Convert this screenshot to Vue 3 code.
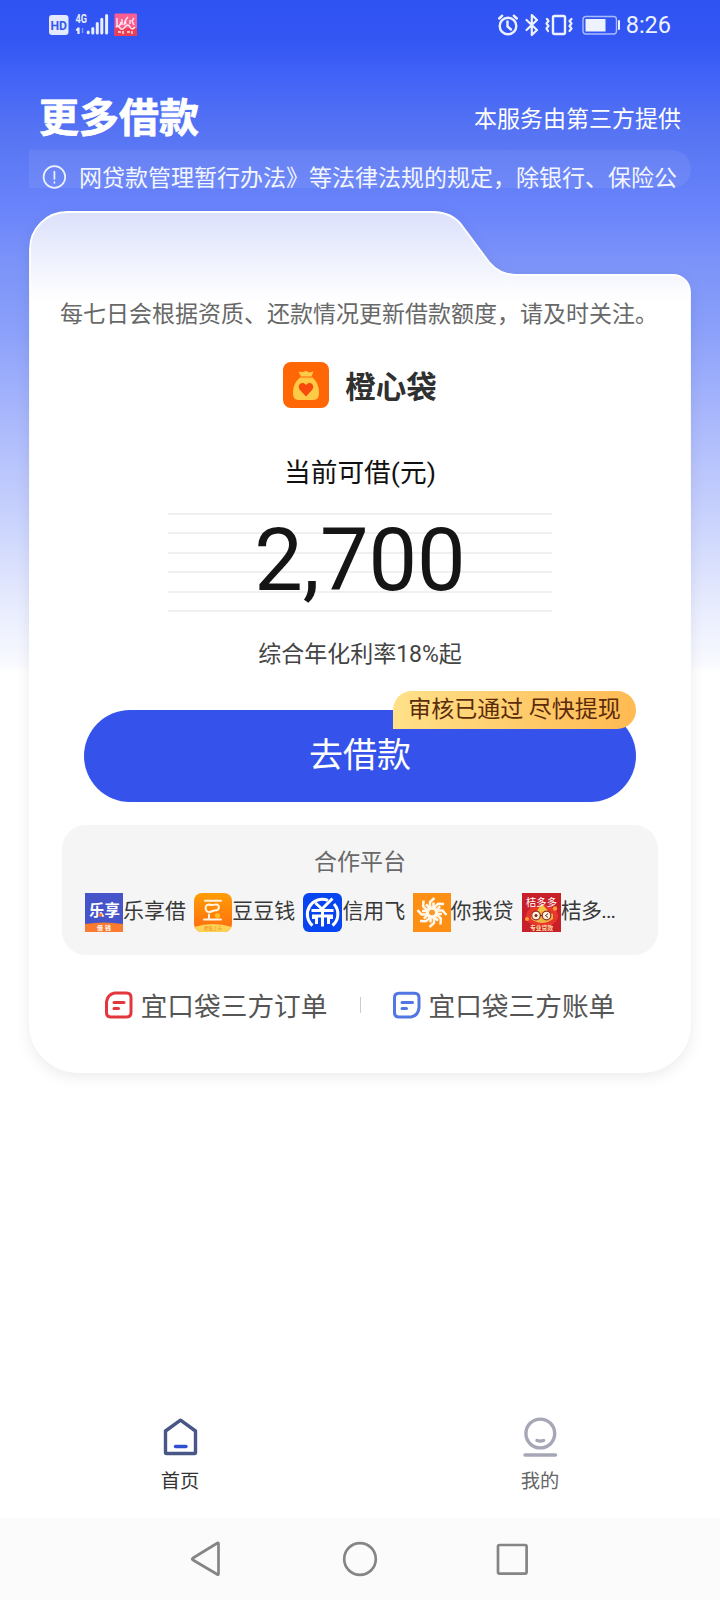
<script setup>
const platforms = [
  { id: 'lexiang', name: '乐享借' },
  { id: 'doudou', name: '豆豆钱' },
  { id: 'feifei', name: '信用飞' },
  { id: 'niwo', name: '你我贷' },
  { id: 'juduo', name: '桔多...' },
]
const petals = [0, 45, 90, 135, 180, 225, 270, 315]
</script>

<template>
  <div class="screen">
    <header class="status">
      <svg class="status-left" width="92" height="26" viewBox="0 0 92 26">
        <rect x="1" y="3" width="19.500" height="20" rx="3" fill="#e3e9ff" />
        <text x="10.700" y="17.800" text-anchor="middle" font-size="13.500" font-weight="700" fill="#3459ee" textLength="16.500" lengthAdjust="spacingAndGlyphs">HD</text>
        <text x="27.500" y="11" font-size="13" font-weight="700" fill="#e8edff" textLength="11.500" lengthAdjust="spacingAndGlyphs">4G</text>
        <path d="M30.500 15.500v6.500M28.300 18.500l2-2" stroke="#e8edff" stroke-width="2.200" fill="none" />
        <path d="M34.500 16v5" stroke="#7f96fb" stroke-width="1.500" />
        <path d="M40.200 20v.8M44.800 16.500v4.500M49.300 11.500v9.500M53.800 7.300v13.700M58.600 3.500v17.500" stroke="#e8edff" stroke-width="3" stroke-linecap="round" />
        <rect x="66.500" y="1.500" width="22.500" height="22.500" rx="1" fill="#fb5f91" />
        <path d="M66.500 16h22.500v7a1 1 0 0 1-1 1h-20.500a1 1 0 0 1-1-1z" fill="#ee3d55" />
        <path d="M69 6v8q3 1 4-4M74 7v6M77 9l-1 4M80 5q-4 4-2 7M82 8v4M86 6l-2 3 2 4M68 15q2-2 4 1t5-1 5 0 5 0M70 20h3M75 19v3M79 20h3M84 19v3" stroke="#ffe9ef" stroke-width="1.400" fill="none" />
      </svg>
      <div class="status-right">
        <svg width="124" height="24" viewBox="0 0 124 24" fill="none" stroke="#eef2ff" stroke-linecap="round" stroke-linejoin="round">
          <g stroke-width="2.400">
            <circle cx="12" cy="13" r="8.300" />
            <path d="M11.500 8.500v5l3.500 3M3.200 5.500l3-2.800M20.800 5.500l-3-2.800" />
          </g>
          <path d="M30.500 7l10.500 10-5.200 5v-20l5.200 5-10.500 10" stroke-width="2.200" />
          <rect x="57" y="3" width="12" height="18" rx="1.500" stroke-width="2.400" />
          <path d="M51 6l1.500 2-2 2.500 2 2.500-2 2.500 1.500 2.500M75.500 6l-2 2 2 2.500-2 2.500 2 2.500-2 2.500" stroke-width="2.200" />
          <rect x="87" y="3.500" width="33.500" height="17.500" rx="3" stroke="#a9baff" stroke-width="1.400" />
          <rect x="89.500" y="6" width="20" height="12.500" fill="#eef2ff" stroke="none" />
          <path d="M123 8v8" stroke-width="2" />
        </svg>
        <span>8:26</span>
      </div>
    </header>

    <div class="heading">
      <h1>更多借款</h1>
      <span>本服务由第三方提供</span>
    </div>

    <div class="notice">
      <svg width="26" height="26" viewBox="0 0 26 26" fill="none" stroke="#eef2ff" stroke-width="1.700" stroke-linecap="round">
        <circle cx="13.400" cy="13" r="10.800" />
        <path d="M13.400 7.500v7.500M13.400 18v.8" />
      </svg>
      <div class="marquee">网贷款管理暂行办法》等法律法规的规定，除银行、保险公</div>
    </div>

    <main class="card">
      <svg class="card-shape" width="662" height="862" viewBox="0 0 662 862">
        <defs>
          <linearGradient id="tabFill" x1="0" y1="0" x2="0" y2="90" gradientUnits="userSpaceOnUse">
            <stop offset="0" stop-color="#dbe0fb" />
            <stop offset="1" stop-color="#ffffff" />
          </linearGradient>
        </defs>
        <path d="M1 38A37 37 0 0 1 38 1H404C418 1 427 6 434 16L460 51Q470 63 486 64H644A17 17 0 0 1 661 81V813A48 48 0 0 1 613 861H49A48 48 0 0 1 1 813Z" fill="url(#tabFill)" stroke="#ffffff" stroke-width="1.800" />
      </svg>

      <p class="tip">每七日会根据资质、还款情况更新借款额度，请及时关注。</p>

      <div class="brand">
        <svg width="46" height="46" viewBox="0 0 46 46">
          <rect width="46" height="46" rx="8" fill="#ff6606" />
          <path d="M15.500 9.500l4 .8 3.500-1.500 3 1.700 4.500-1-2 5H18zM17 15.500h12.500q6.500 6 6.500 14.500c0 5-1 8-6 8H16c-5 0-6-3-6-8q0-8.500 7-14.500z" fill="#ffcb46" />
          <path d="M17 15.500h12.500" stroke="#fb9a2c" stroke-width="1.300" />
          <path d="M23 34.500l-6-6.500c-4-5 2.500-10 6-5 3.500-5 10 0 6 5z" fill="#f94a0d" />
        </svg>
        <strong>橙心袋</strong>
      </div>

      <div class="limit-label">当前可借(元)</div>
      <div class="amount">2,700</div>
      <div class="rate">综合年化利率18%起</div>

      <div class="cta">
        <button type="button">去借款</button>
        <span class="badge">审核已通过 尽快提现</span>
      </div>

      <section class="partners">
        <div class="partners-title">合作平台</div>
        <div class="partners-row">
          <div v-for="p in platforms" :key="p.id" class="partner" :class="p.id">
            <svg v-if="p.id === 'lexiang'" width="38" height="39" viewBox="0 0 38 39">
              <rect width="38" height="39" fill="#4654ca" />
              <path d="M0 31q19-3 38 0v8H0z" fill="#f87b30" />
              <text x="19.500" y="22.800" text-anchor="middle" font-size="15.500" font-weight="700" fill="#fff">乐享</text>
              <circle cx="15.500" cy="22" r="1.700" fill="#f87b30" />
              <text x="20" y="36.500" text-anchor="middle" font-size="6" font-weight="700" fill="#fff" letter-spacing="2">借钱</text>
            </svg>
            <svg v-else-if="p.id === 'doudou'" width="38" height="39" viewBox="0 0 38 39">
              <defs>
                <linearGradient id="bean" x1="0" y1="0" x2="0" y2="1">
                  <stop offset="0" stop-color="#ff9d05" />
                  <stop offset="1" stop-color="#ff6a12" />
                </linearGradient>
                <clipPath id="beanClip"><rect width="38" height="39" rx="8" /></clipPath>
              </defs>
              <g clip-path="url(#beanClip)">
                <rect width="38" height="39" fill="url(#bean)" />
                <path d="M0 34q19-6 38 0v5H0z" fill="#ffd454" />
              </g>
              <g fill="none" stroke="#fff4df" stroke-width="2" stroke-linecap="round">
                <path d="M11 7.800h16M10 26.500h17M15 21.500v4" />
                <path d="M15 11.500c-5 0-4 7.500 0 7.500 3 0 3-1.500 6-1.500 5 0 5-6 1-6-3 0-4 1.500-7 0z" />
              </g>
              <circle cx="23.500" cy="22.500" r="2.600" fill="#ffbd22" />
              <text x="19" y="37" text-anchor="middle" font-size="4.500" fill="#ef8422">赊账上市</text>
            </svg>
            <svg v-else-if="p.id === 'feifei'" width="39" height="39" viewBox="0 0 39 39">
              <rect width="39" height="39" rx="6" fill="#0745f0" />
              <g fill="none" stroke="#fff" stroke-width="3">
                <path d="M9.500 32.500A15 15 0 0 1 25 7.300M31 11A15 15 0 0 1 29.500 32.500" />
                <path d="M12.500 10l6.500 6L29.500 5.500M8.500 17.500h22M10.500 26v-3h18v3M19.500 17v16.500M13.500 31v-8M25.500 31v-8" />
              </g>
            </svg>
            <svg v-else-if="p.id === 'niwo'" width="38" height="39" viewBox="0 0 38 39">
              <rect width="38" height="39" fill="#fd9014" />
              <g v-for="a in petals" :key="a" :transform="`rotate(${a} 19 19.500)`">
                <path d="M17 16V9l4.500-4M20.500 15V9.500" fill="none" stroke="#fff8eb" stroke-width="2.500" />
              </g>
              <circle cx="19" cy="19.500" r="4.500" fill="none" stroke="#fff8eb" stroke-width="3.500" />
              <circle cx="19" cy="19.500" r="2.600" fill="#f49a2b" />
            </svg>
            <svg v-else width="39" height="39" viewBox="0 0 39 39">
              <rect width="39" height="39" fill="#c8202a" />
              <ellipse cx="20" cy="23" rx="16" ry="11" fill="#e8362c" />
              <circle cx="33" cy="15.500" r="2.200" fill="#ff9d3b" />
              <circle cx="5" cy="26" r="2" fill="#ff9d3b" />
              <path d="M14 19l6-8 7 8z" fill="#f5c63f" />
              <path d="M9 21q11-5 22 0v5q-11 8-22 0z" fill="#efb345" />
              <g fill="#fff2dc" stroke="#983022" stroke-width="1.200">
                <circle cx="14" cy="22.500" r="4.300" />
                <circle cx="24.500" cy="22.500" r="4.300" />
              </g>
              <circle cx="14" cy="22.500" r="1.500" fill="#6d2520" />
              <path d="M26 20.500l-2.500 2 2.500 2M18 22.500h2" stroke="#6d2520" fill="none" />
              <text x="19.500" y="12.500" text-anchor="middle" font-size="10.300" font-weight="400" fill="#fff">桔多多</text>
              <text x="19.500" y="36.800" text-anchor="middle" font-size="5.800" font-weight="700" fill="#ffdfa1">专业贷款</text>
            </svg>
            <span>{{ p.name }}</span>
          </div>
        </div>
      </section>

      <nav class="links">
        <a>
          <svg width="28" height="28" viewBox="0 0 28 28" fill="none" stroke="#e2383d" stroke-width="3" stroke-linecap="round" stroke-linejoin="round">
            <path d="M9.500 2h12q4.500 0 4.500 4.500v15q0 4.500-4.500 4.500H6q-4.500 0-4.500-4.500V11Q2.500 3.500 9.500 2z" />
            <path d="M9 11.500h10M9 17.500h4.500" />
          </svg>
          <span>宜口袋三方订单</span>
        </a>
        <i></i>
        <a>
          <svg width="28" height="28" viewBox="0 0 28 28" fill="none" stroke="#5277e2" stroke-width="3" stroke-linecap="round" stroke-linejoin="round">
            <path d="M6 2.200h15.500q4.500 0 4.500 4.500v10q-1 8-8 9.300H6q-4.500 0-4.500-4.500V6.700Q1.500 2.200 6 2.200z" />
            <path d="M9 11.500h10.500M9 17.500h4.500" />
          </svg>
          <span>宜口袋三方账单</span>
        </a>
      </nav>
    </main>

    <nav class="tabs">
      <div class="tab active">
        <svg width="40" height="42" viewBox="0 0 40 42" fill="none" stroke-width="3.400" stroke-linecap="round" stroke-linejoin="round">
          <path d="M5.500 15L20.500 4.200l15 10.800v21.500q0 1-1 1h-28q-1 0-1-1z" stroke="#495787" />
          <path d="M15.500 30.500h10.500" stroke="#3050d4" />
        </svg>
        <span>首页</span>
      </div>
      <div class="tab">
        <svg width="40" height="42" viewBox="0 0 40 42" fill="none" stroke="#a5a7b7" stroke-width="3.400" stroke-linecap="round">
          <circle cx="20.300" cy="17.500" r="14.400" />
          <path d="M17 24.500q3.300 1.200 6.600 0M5 39h30.500" />
        </svg>
        <span>我的</span>
      </div>
    </nav>

    <footer class="sysnav">
      <svg width="32" height="38" viewBox="0 0 32 38"><path d="M27.500 3.500v30.500q0 1-1 .5L2 20q-1.500-1 0-2L26.500 3q1-.5 1 .5z" /></svg>
      <svg width="38" height="38" viewBox="0 0 38 38"><circle cx="20" cy="19" r="15.800" /></svg>
      <svg width="34" height="38" viewBox="0 0 34 38"><rect x="3" y="5" width="28.600" height="28.600" rx="1.500" /></svg>
    </footer>
  </div>
</template>

<style>
body {
  margin: 0;
  background: #fff;
}
</style>

<style scoped>
.screen {
  width: 720px;
  height: 1600px;
  overflow: hidden;
  display: flex;
  flex-direction: column;
  font-family: Roboto, "Noto Sans CJK SC", sans-serif;
  background: linear-gradient(180deg, #2f53f3 0, #3356f3 40px, #4163f7 75px, #5573f3 130px, #5f7bf5 165px, #6883fb 205px, #7b93f9 260px, #8ba0fa 330px, #aab8fc 420px, #c9d3fd 520px, #e6eafe 600px, #f9faff 665px, #fff 671px) no-repeat, #fff;
}
.status {
  height: 50px;
  flex: none;
  display: flex;
  justify-content: space-between;
  padding: 12px 49px 0 48px;
  box-sizing: border-box;
}
.status-right {
  display: flex;
  height: 26px;
  align-items: center;
  color: #eef2ff;
  font-size: 23.500px;
  gap: 6px;
}
.heading {
  height: 100px;
  flex: none;
  box-sizing: border-box;
  padding: 36px 39px 0 39px;
  display: flex;
  align-items: center;
  justify-content: space-between;
  color: #fff;
  font-size: 23px;
}
.heading span {
  margin-top: -2px;
}
h1 {
  margin: 2px 0 0;
  font-size: 40px;
  line-height: 60px;
  font-weight: 700;
  -webkit-text-stroke: 0.7px #fff;
}
.notice {
  width: 662px;
  height: 38px;
  flex: none;
  box-sizing: border-box;
  margin-left: 29px;
  padding: 15px 14px 0 12px;
  border-radius: 0 19px 19px 0;
  background: rgba(255, 255, 255, 0.07);
  display: flex;
  gap: 13px;
}
.notice svg {
  flex: none;
  margin-top: -1px;
}
.marquee {
  color: #f3f6ff;
  font-size: 23px;
  line-height: 28px;
  height: 34px;
  white-space: nowrap;
  text-indent: -1px;
}
.card {
  position: relative;
  width: 662px;
  height: 862px;
  flex: none;
  margin: 23px 0 0 29px;
  display: flex;
  flex-direction: column;
  align-items: center;
  isolation: isolate;
}
.card-shape {
  position: absolute;
  inset: 0;
  z-index: -1;
  filter: drop-shadow(0 4px 7px rgba(0, 0, 0, 0.08));
}
.tip {
  margin: 88px 2px 0 0;
  font-size: 23px;
  line-height: 32px;
  color: #686868;
  white-space: nowrap;
}
.brand {
  margin-top: 31px;
  height: 46px;
  display: flex;
  align-items: center;
  gap: 16px;
}
.brand strong {
  font-size: 30.500px;
  color: #303030;
}
.limit-label {
  margin-top: 46px;
  font-size: 26.700px;
  line-height: 38px;
  color: #111;
}
.amount {
  width: 384px;
  height: 99px;
  margin-top: 21px;
  text-align: center;
  font-size: 86.500px;
  line-height: 96px;
  color: #151515;
  background: repeating-linear-gradient(180deg, #f0f0f2 0, #f0f0f2 2px, transparent 2px, transparent 19.400px);
}
.rate {
  margin-top: 26px;
  font-size: 23px;
  line-height: 34px;
  color: #444;
}
.cta {
  position: relative;
  width: 552px;
  height: 92px;
  margin-top: 38px;
}
button {
  width: 100%;
  height: 100%;
  border: 0;
  padding: 0 0 7px;
  border-radius: 46px;
  background: #3553eb;
  color: #fff;
  font: 34px Roboto, "Noto Sans CJK SC", sans-serif;
}
.badge {
  position: absolute;
  right: 0;
  top: -19px;
  width: 243px;
  height: 38px;
  line-height: 38px;
  text-align: center;
  white-space: nowrap;
  font-size: 23px;
  color: #5b2c0b;
  border-radius: 19px 19px 19px 0;
  background: linear-gradient(100deg, #ffe18a, #ffb951);
}
.partners {
  width: 596px;
  height: 130px;
  margin-top: 23px;
  border-radius: 24px;
  background: #f5f5f5;
  box-sizing: border-box;
  padding: 21px 0 0 23px;
}
.partners-title {
  text-align: center;
  margin-left: -23px;
  font-size: 23px;
  line-height: 34px;
  color: #686868;
}
.partners-row {
  display: grid;
  grid-template-columns: repeat(5, 109.200px);
  margin-top: 13px;
}
.partner {
  display: flex;
  align-items: center;
  height: 39px;
  white-space: nowrap;
  font-size: 21px;
  color: #383838;
}
.partner span {
  line-height: 32px;
  margin-top: -3px;
}
.juduo span {
  letter-spacing: -0.800px;
}
.links {
  width: 100%;
  margin-top: 30px;
  height: 40px;
  display: flex;
  align-items: center;
  justify-content: center;
  color: #555;
  font-size: 26.700px;
}
.links a {
  display: flex;
  align-items: center;
  gap: 8px;
}
.links a span {
  margin-top: -2px;
}
.links i {
  width: 1px;
  height: 16px;
  margin: 0 32px;
  background: #ccc;
}
.tabs {
  margin-top: 343px;
  height: 102px;
  flex: none;
  display: flex;
}
.tab {
  flex: 1;
  display: flex;
  flex-direction: column;
  align-items: center;
  font-size: 19.300px;
  line-height: 28px;
  color: #666;
}
.tab span {
  margin-top: 10px;
}
.tab.active {
  color: #333;
}
.sysnav {
  flex: 1;
  background: #fbfbfb;
  display: flex;
  justify-content: center;
  align-items: center;
  gap: 117px;
}
.sysnav svg {
  fill: none;
  stroke: #858585;
  stroke-width: 2.700px;
  stroke-linejoin: round;
}
</style>
